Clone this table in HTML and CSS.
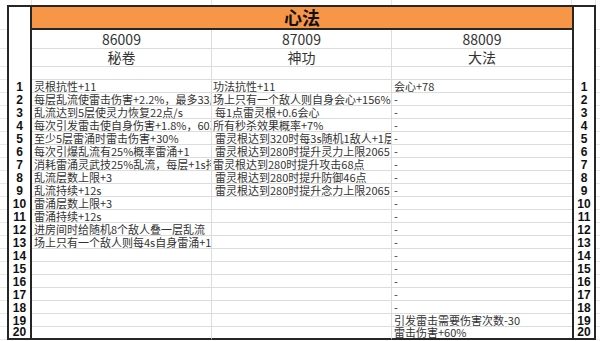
FILE: index.html
```html
<!DOCTYPE html>
<html lang="zh-CN">
<head>
<meta charset="utf-8">
<title>心法</title>
<link rel="stylesheet" href="styles.css">
</head>
<body>
<table class="sheet">
<colgroup>
<col class="w-ml"><col class="w-n"><col class="w-a"><col class="w-b"><col class="w-c"><col class="w-n2"><col class="w-mr">
</colgroup>
<tr class="r-top"><td class="m"></td><td class="tg"></td><td class="tg"></td><td class="tg"></td><td class="tg"></td><td class="tg"></td><td class="m"></td></tr>
<tr class="r-title"><td class="m"></td><td class="n"></td><td class="title" colspan="3">心法</td><td class="n"></td><td class="m"></td></tr>
<tr class="r-id"><td class="m"></td><td class="n"></td><td class="a hd">86009</td><td class="b hd">87009</td><td class="c hd">88009</td><td class="n"></td><td class="m"></td></tr>
<tr class="r-name"><td class="m"></td><td class="n"></td><td class="a hd">秘卷</td><td class="b hd">神功</td><td class="c hd">大法</td><td class="n"></td><td class="m"></td></tr>
<tr class="r-blank"><td class="m"></td><td class="n"></td><td class="a"></td><td class="b"></td><td class="c"></td><td class="n"></td><td class="m"></td></tr>
<tr class="r"><td class="m"></td><td class="n">1</td><td class="a">灵根抗性+11</td><td class="b">功法抗性+11</td><td class="c">会心+78</td><td class="n">1</td><td class="m"></td></tr>
<tr class="r"><td class="m"></td><td class="n">2</td><td class="a">每层乱流使雷击伤害+2.2%，最多33层</td><td class="b">场上只有一个敌人则自身会心+156%</td><td class="c">-</td><td class="n">2</td><td class="m"></td></tr>
<tr class="r"><td class="m"></td><td class="n">3</td><td class="a">乱流达到5层使灵力恢复22点/s</td><td class="b ind">每1点雷灵根+0.6会心</td><td class="c">-</td><td class="n">3</td><td class="m"></td></tr>
<tr class="r"><td class="m"></td><td class="n">4</td><td class="a">每次引发雷击使自身伤害+1.8%，60次</td><td class="b">所有秒杀效果概率+7%</td><td class="c">-</td><td class="n">4</td><td class="m"></td></tr>
<tr class="r"><td class="m"></td><td class="n">5</td><td class="a">至少5层雷涌时雷击伤害+30%</td><td class="b ind">雷灵根达到320时每3s随机1敌人+1层</td><td class="c">-</td><td class="n">5</td><td class="m"></td></tr>
<tr class="r"><td class="m"></td><td class="n">6</td><td class="a">每次引爆乱流有25%概率雷涌+1</td><td class="b ind">雷灵根达到280时提升灵力上限2065</td><td class="c">-</td><td class="n">6</td><td class="m"></td></tr>
<tr class="r"><td class="m"></td><td class="n">7</td><td class="a">消耗雷涌灵武技25%乱流，每层+1s持</td><td class="b">雷灵根达到280时提升攻击68点</td><td class="c">-</td><td class="n">7</td><td class="m"></td></tr>
<tr class="r"><td class="m"></td><td class="n">8</td><td class="a">乱流层数上限+3</td><td class="b ind">雷灵根达到280时提升防御46点</td><td class="c">-</td><td class="n">8</td><td class="m"></td></tr>
<tr class="r"><td class="m"></td><td class="n">9</td><td class="a">乱流持续+12s</td><td class="b ind">雷灵根达到280时提升念力上限2065</td><td class="c">-</td><td class="n">9</td><td class="m"></td></tr>
<tr class="r"><td class="m"></td><td class="n">10</td><td class="a">雷涌层数上限+3</td><td class="b"></td><td class="c">-</td><td class="n">10</td><td class="m"></td></tr>
<tr class="r"><td class="m"></td><td class="n">11</td><td class="a">雷涌持续+12s</td><td class="b"></td><td class="c">-</td><td class="n">11</td><td class="m"></td></tr>
<tr class="r"><td class="m"></td><td class="n">12</td><td class="a">进房间时给随机8个敌人叠一层乱流</td><td class="b"></td><td class="c">-</td><td class="n">12</td><td class="m"></td></tr>
<tr class="r"><td class="m"></td><td class="n">13</td><td class="a spill">场上只有一个敌人则每4s自身雷涌+1</td><td class="b"></td><td class="c">-</td><td class="n">13</td><td class="m"></td></tr>
<tr class="r"><td class="m"></td><td class="n">14</td><td class="a"></td><td class="b"></td><td class="c">-</td><td class="n">14</td><td class="m"></td></tr>
<tr class="r"><td class="m"></td><td class="n">15</td><td class="a"></td><td class="b"></td><td class="c">-</td><td class="n">15</td><td class="m"></td></tr>
<tr class="r"><td class="m"></td><td class="n">16</td><td class="a"></td><td class="b"></td><td class="c">-</td><td class="n">16</td><td class="m"></td></tr>
<tr class="r"><td class="m"></td><td class="n">17</td><td class="a"></td><td class="b"></td><td class="c">-</td><td class="n">17</td><td class="m"></td></tr>
<tr class="r"><td class="m"></td><td class="n">18</td><td class="a"></td><td class="b"></td><td class="c">-</td><td class="n">18</td><td class="m"></td></tr>
<tr class="r"><td class="m"></td><td class="n">19</td><td class="a"></td><td class="b"></td><td class="c">引发雷击需要伤害次数-30</td><td class="n">19</td><td class="m"></td></tr>
<tr class="r last"><td class="m"></td><td class="n">20</td><td class="a"></td><td class="b"></td><td class="c">雷击伤害+60%</td><td class="n">20</td><td class="m"></td></tr>
</table>
</body>
</html>
```

FILE: styles.css
```css
html, body {
  margin: 0;
  padding: 0;
  background: #ffffff;
}

.sheet {
  border-collapse: separate;
  border-spacing: 0;
  table-layout: fixed;
  width: 600px;
  font-family: "Noto Sans CJK SC", "Noto Sans", sans-serif;
  font-size: 11px;
  color: #333333;
}

.w-ml { width: 7px; }
.w-n { width: 25px; }
.w-a { width: 180px; }
.w-b { width: 180px; }
.w-c { width: 180px; }
.w-n2 { width: 24px; }
.w-mr { width: 4px; }

.sheet td {
  padding: 0;
  box-sizing: border-box;
  white-space: nowrap;
  overflow-x: clip;
  overflow-y: visible;
  vertical-align: middle;
  line-height: 12px;
}

/* outer margin cells: faint sheet gridlines */
.sheet td.m {
  border-bottom: 1px solid #e8e8e8;
}
.r-top td.m {
  border-bottom: none;
}

/* top strip gridlines */
.sheet td.tg {
  border-right: 1px solid #e4e4e4;
}

.r-top { height: 5px; }
.r-title { height: 25px; }
.r-id { height: 19px; }
.r-name { height: 18px; }
.r-blank { height: 13px; }
.r { height: 13px; }

/* row number columns */
.sheet td.n {
  border-left: 2px solid #262626;
  border-right: 2px solid #262626;
  text-align: center;
  font-family: "Liberation Sans", "Noto Sans", sans-serif;
  font-weight: bold;
  font-size: 12px;
  color: #111111;
}
.r-title td.n {
  border-top: 2px solid #262626;
}

/* title band */
.sheet td.title {
  background: #f79646;
  border-top: 2px solid #262626;
  border-bottom: 2px solid #262626;
  text-align: center;
  font-weight: bold;
  font-size: 18px;
  line-height: 21px;
  color: #111111;
}

/* data columns */
.sheet td.a,
.sheet td.b {
  border-right: 1px solid #dcdcdc;
  border-bottom: 1px solid #dcdcdc;
}
.sheet td.c {
  border-bottom: 1px solid #dcdcdc;
}
.sheet td.a { padding-left: 2px; }
.sheet td.b { padding-left: 1px; }
.sheet td.b.ind { padding-left: 3px; }
.sheet td.c { padding-left: 2px; }

.sheet td.spill {
  overflow: visible;
}

.sheet td.hd {
  text-align: center;
  font-size: 14px;
  padding-left: 0;
}
.r-id td.hd { line-height: 18px; }
.r-name td.hd { line-height: 17px; }

/* bottom frame */
.last td.n,
.last td.a,
.last td.b,
.last td.c {
  border-bottom: 2px solid #262626;
  line-height: 11px;
}
```
